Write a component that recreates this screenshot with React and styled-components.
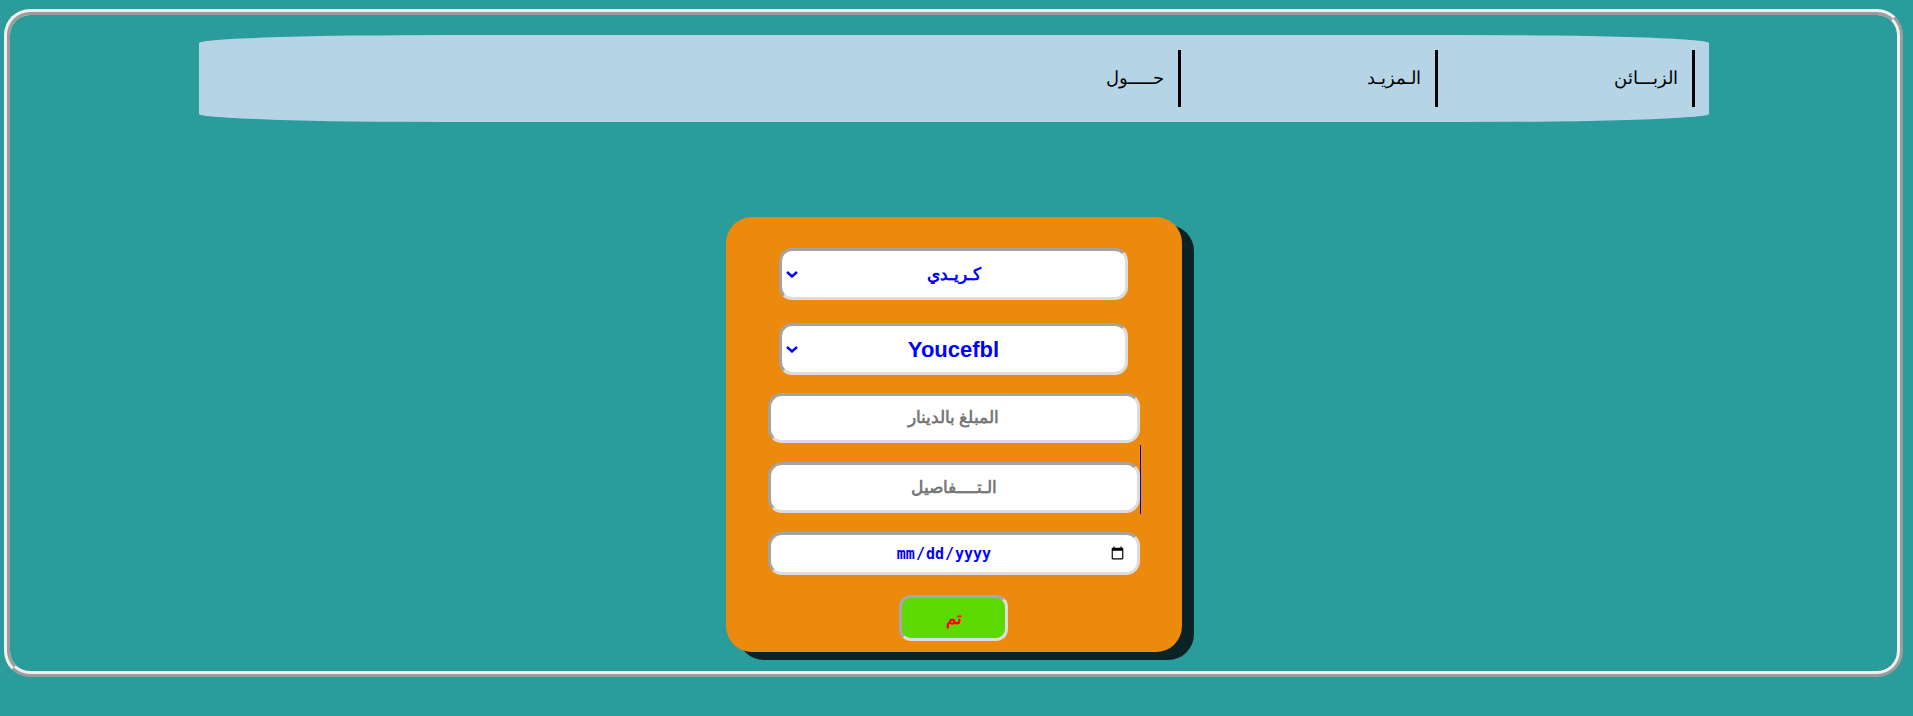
import React from "react";
import styled, { createGlobalStyle } from "styled-components";

const GlobalStyle = createGlobalStyle`
  html, body {
    margin: 0;
    background: #2a9c9b;
    font-family: "Liberation Sans", Arial, sans-serif;
  }
`;

const Frame = styled.div`
  box-sizing: border-box;
  width: 1899px;
  height: 668px;
  margin: 9px 0 0 4px;
  padding-top: 20px;
  border: 6px ridge #f0f0f0;
  border-radius: 26px;
  display: flex;
  flex-direction: column;
  align-items: center;
`;

const NavBar = styled.nav`
  box-sizing: border-box;
  width: 1510px;
  height: 87px;
  padding: 15px 14px;
  background: #b5d5e6;
  border-radius: 250px / 8px;
  direction: rtl;
  display: flex;
`;

const NavItem = styled.a`
  box-sizing: border-box;
  width: 257px;
  height: 57px;
  padding-right: 14px;
  border-right: 3px solid #000;
  color: #000;
  font-size: 18px;
  line-height: 57px;
  text-decoration: none;
`;

const Card = styled.form`
  box-sizing: border-box;
  width: 456px;
  height: 435px;
  margin-top: 95px;
  padding-top: 31px;
  background: #ec8a0d;
  border-radius: 26px;
  box-shadow: 12px 8px 0 #0b2325;
  direction: rtl;
  display: flex;
  flex-direction: column;
  align-items: center;
`;

const SelectWrap = styled.div`
  position: relative;
  margin-bottom: ${(p) => p.$gap}px;
`;

const Select = styled.select`
  box-sizing: border-box;
  appearance: none;
  width: 349px;
  height: 52px;
  padding: 0 24px;
  border: 3px solid;
  border-color: #a3a3a3 #dcdcdc #dcdcdc #a3a3a3;
  border-radius: 13px;
  background: #fff;
  color: #0000ff;
  font-family: "Liberation Sans", Arial, sans-serif;
  font-weight: bold;
  font-size: ${(p) => p.$size}px;
  text-align: center;
  text-align-last: center;
  outline: none;
`;

const Chevron = styled.svg`
  position: absolute;
  left: 7px;
  top: 23px;
  pointer-events: none;
`;

const Field = styled.input`
  box-sizing: border-box;
  width: 372px;
  height: ${(p) => p.$h}px;
  border: 3px solid;
  border-color: #a3a3a3 #dcdcdc #dcdcdc #a3a3a3;
  border-radius: 14px;
  background: #fff;
  color: #0000ff;
  font-family: "Liberation Sans", Arial, sans-serif;
  font-weight: bold;
  font-size: 17px;
  text-align: center;
  outline: none;

  &::placeholder {
    color: #777;
  }
`;

const FieldRow = styled.div`
  position: relative;
  margin-bottom: 19px;

  &::after {
    content: ${(p) => (p.$marked ? '""' : "none")};
    position: absolute;
    right: -1px;
    top: -17px;
    bottom: -1px;
    width: 1px;
    background: #0000ff;
  }
`;

const DateField = styled(Field)`
  direction: ltr;
  font-family: "DejaVu Sans Mono", monospace;
  font-size: 15px;
  padding: 0 10px;
`;

const Submit = styled.button`
  box-sizing: border-box;
  width: 109px;
  height: 46px;
  margin-top: 1px;
  border: 3px solid;
  border-color: #a8a8a8 #dedede #dedede #a8a8a8;
  border-radius: 12px;
  background: #5cd900;
  color: #ff0000;
  font-family: "Liberation Sans", Arial, sans-serif;
  font-weight: bold;
  font-size: 17px;
`;

const DownArrow = () => (
  <Chevron width="12" height="7" viewBox="0 0 12 7">
    <path d="M1 1l5 4.5L11 1" fill="none" stroke="#0000ff" strokeWidth="2.4" />
  </Chevron>
);

export default function App() {
  return (
    <>
      <GlobalStyle />
      <Frame>
        <NavBar>
          <NavItem href="#">الزبـــائن</NavItem>
          <NavItem href="#">الـمزيـد</NavItem>
          <NavItem href="#">حـــــول</NavItem>
        </NavBar>
        <Card onSubmit={(e) => e.preventDefault()}>
          <SelectWrap $gap={23}>
            <Select $size={17} defaultValue="credit">
              <option value="credit">كـريـدي</option>
              <option value="cash">نقدا</option>
            </Select>
            <DownArrow />
          </SelectWrap>
          <SelectWrap $gap={18}>
            <Select $size={22} defaultValue="youcef">
              <option value="youcef">Youcefbl</option>
            </Select>
            <DownArrow />
          </SelectWrap>
          <FieldRow>
            <Field $h={50} type="text" placeholder="المبلغ بالدينار" />
          </FieldRow>
          <FieldRow $marked>
            <Field $h={51} type="text" placeholder="الـتــــفاصيل" />
          </FieldRow>
          <FieldRow>
            <DateField $h={43} type="date" />
          </FieldRow>
          <Submit type="submit">تم</Submit>
        </Card>
      </Frame>
    </>
  );
}
